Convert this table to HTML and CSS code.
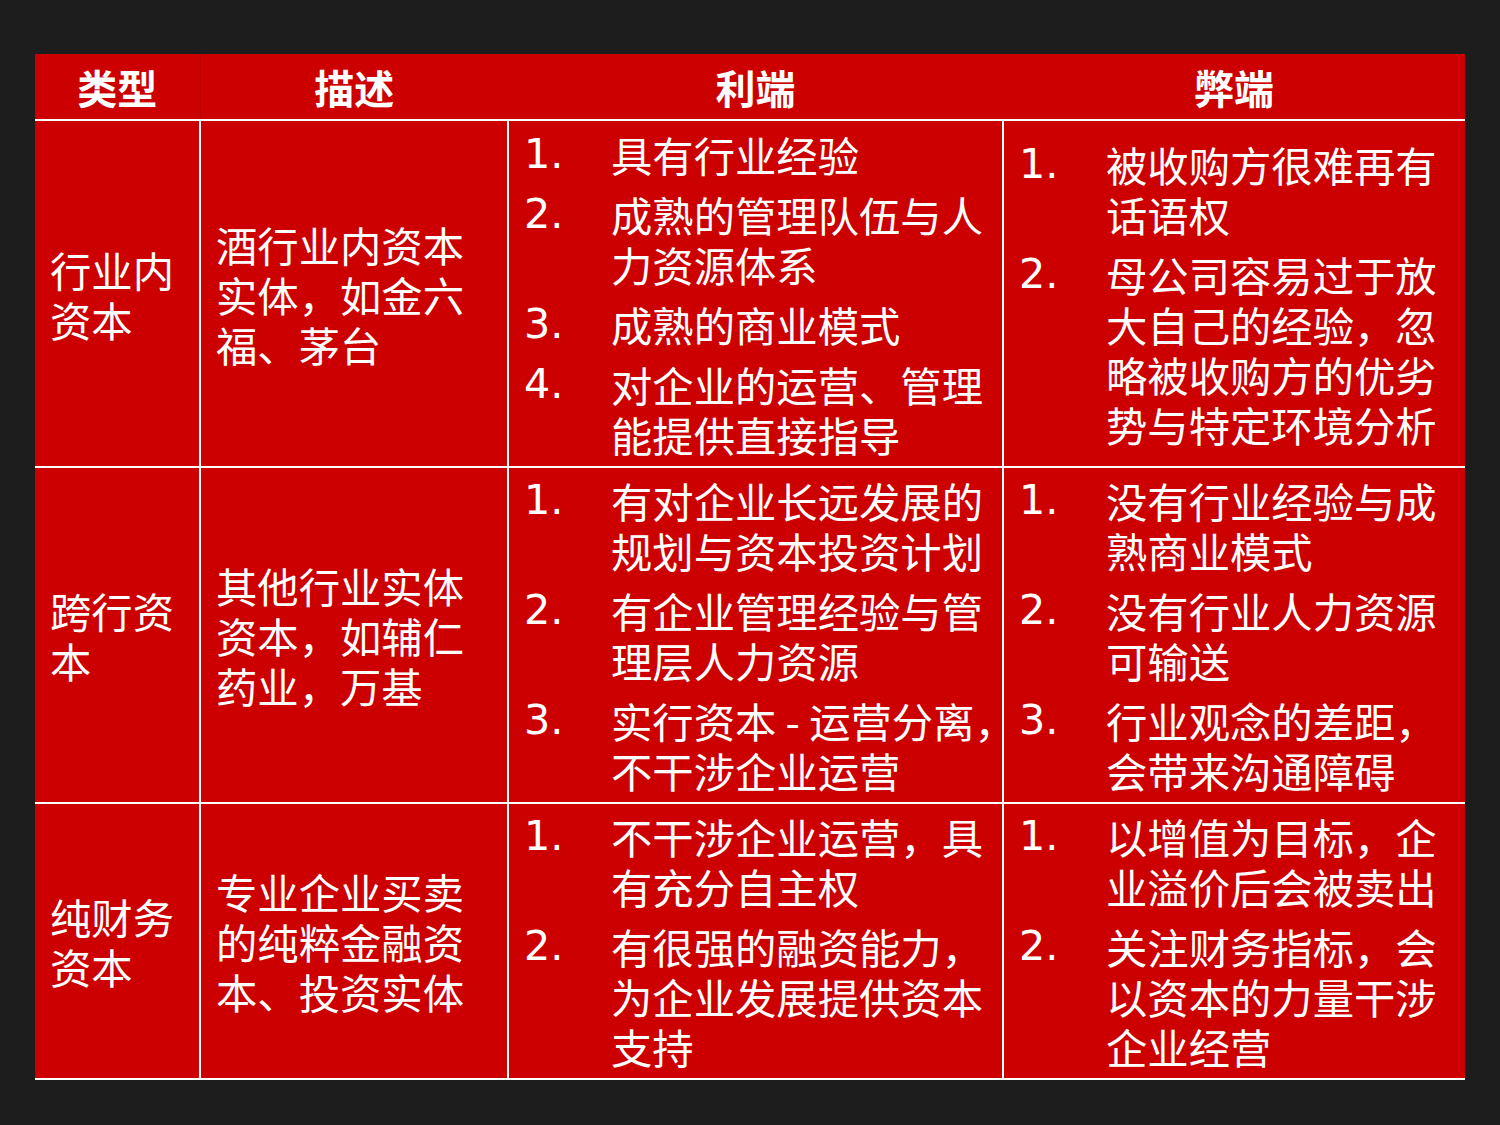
FILE: index.html
```html
<!DOCTYPE html>
<html lang="zh-CN">
<head>
<meta charset="utf-8">
<title>资本类型对比</title>
<link rel="stylesheet" href="styles.css">
</head>
<body>
<table class="compare">
  <colgroup>
    <col class="c-type">
    <col class="c-desc">
    <col class="c-pro">
    <col class="c-con">
  </colgroup>
  <thead>
    <tr class="head-row">
      <th class="th-first">类型</th>
      <th>描述</th>
      <th>利端</th>
      <th>弊端</th>
    </tr>
  </thead>
  <tbody>
    <tr class="row-1">
      <td class="type">行业内资本</td>
      <td class="desc">酒行业内资本实体，如金六福、茅台</td>
      <td class="list">
        <div class="item"><span class="num">1.</span><span class="txt">具有行业经验</span></div>
        <div class="item"><span class="num">2.</span><span class="txt">成熟的管理队伍与人<br>力资源体系</span></div>
        <div class="item"><span class="num">3.</span><span class="txt">成熟的商业模式</span></div>
        <div class="item"><span class="num">4.</span><span class="txt">对企业的运营、管理<br>能提供直接指导</span></div>
      </td>
      <td class="list">
        <div class="item"><span class="num">1.</span><span class="txt">被收购方很难再有<br>话语权</span></div>
        <div class="item"><span class="num">2.</span><span class="txt">母公司容易过于放<br>大自己的经验，忽<br>略被收购方的优劣<br>势与特定环境分析</span></div>
      </td>
    </tr>
    <tr class="row-2">
      <td class="type">跨行资本</td>
      <td class="desc">其他行业实体资本，如辅仁药业，万基</td>
      <td class="list">
        <div class="item"><span class="num">1.</span><span class="txt">有对企业长远发展的<br>规划与资本投资计划</span></div>
        <div class="item"><span class="num">2.</span><span class="txt">有企业管理经验与管<br>理层人力资源</span></div>
        <div class="item"><span class="num">3.</span><span class="txt">实行资本 - 运营分离，<br>不干涉企业运营</span></div>
      </td>
      <td class="list">
        <div class="item"><span class="num">1.</span><span class="txt">没有行业经验与成<br>熟商业模式</span></div>
        <div class="item"><span class="num">2.</span><span class="txt">没有行业人力资源<br>可输送</span></div>
        <div class="item"><span class="num">3.</span><span class="txt">行业观念的差距，<br>会带来沟通障碍</span></div>
      </td>
    </tr>
    <tr class="row-3">
      <td class="type">纯财务资本</td>
      <td class="desc">专业企业买卖的纯粹金融资本、投资实体</td>
      <td class="list">
        <div class="item"><span class="num">1.</span><span class="txt">不干涉企业运营，具<br>有充分自主权</span></div>
        <div class="item"><span class="num">2.</span><span class="txt">有很强的融资能力，<br>为企业发展提供资本<br>支持</span></div>
      </td>
      <td class="list">
        <div class="item"><span class="num">1.</span><span class="txt">以增值为目标，企<br>业溢价后会被卖出</span></div>
        <div class="item"><span class="num">2.</span><span class="txt">关注财务指标，会<br>以资本的力量干涉<br>企业经营</span></div>
      </td>
    </tr>
  </tbody>
</table>
</body>
</html>
```

FILE: styles.css
```css
html, body {
  margin: 0;
  padding: 0;
  background: #1d1d1d;
}

body {
  padding: 54px 35px 0 35px;
  font-family: "DejaVu Sans", "Noto Sans CJK SC", sans-serif;
  color: #ffffff;
}

.compare {
  width: 1430px;
  table-layout: fixed;
  border-collapse: collapse;
  background: #cc0000;
  border-left: hidden;
  border-right: hidden;
  border-top: hidden;
}

.c-type { width: 165px; }
.c-desc { width: 308px; }
.c-pro  { width: 495px; }
.c-con  { width: 462px; }

.head-row { height: 66px; }
.row-1 { height: 347px; }
.row-2 { height: 336px; }
.row-3 { height: 276px; }

th {
  font-family: "Noto Sans CJK SC", sans-serif;
  font-weight: 700;
  font-size: 40px;
  line-height: 50px;
  text-align: center;
  vertical-align: middle;
  padding: 0;
  border: none;
  border-bottom: 2px solid #ffffff;
}

.th-first {
  border-right: 1px solid #b80000;
}

td {
  border: 2px solid #ffffff;
  vertical-align: middle;
  font-size: 41.33px;
  line-height: 50px;
  padding: 0 17px 0 15px;
  white-space: normal;
}

.type, .desc {
  font-family: "Noto Sans CJK SC", sans-serif;
}

.list {
  padding: 0 0 0 15px;
}

.item {
  display: flex;
  white-space: nowrap;
}

.item + .item {
  margin-top: 10px;
}

.num {
  flex: 0 0 87px;
  font-family: "DejaVu Sans", sans-serif;
}

.txt {
  font-family: "Noto Sans CJK SC", sans-serif;
}
```
